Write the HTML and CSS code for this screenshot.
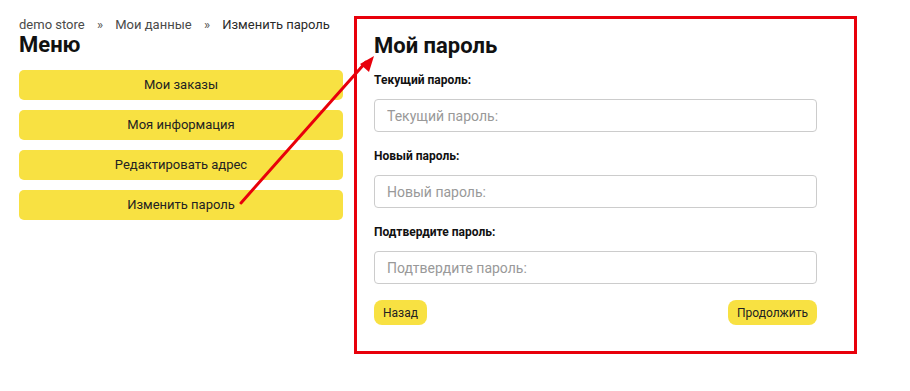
FILE: index.html
```html
<!DOCTYPE html>
<html lang="ru">
<head>
    <meta charset="UTF-8">
    <meta name="viewport" content="width=device-width, initial-scale=1.0">
    <title>Изменить пароль</title>
    <link rel="stylesheet" href="styles.css">
</head>
<body>
    <div class="page">
        <aside class="sidebar">
            <div class="breadcrumb">
                <a href="#">demo store</a>
                <span class="sep">»</span>
                <a href="#">Мои данные</a>
                <span class="sep">»</span>
                <span class="current">Изменить пароль</span>
            </div>
            <h2 class="title">Меню</h2>
            <nav class="menu">
                <a class="menu-item" href="#">Мои заказы</a>
                <a class="menu-item" href="#">Моя информация</a>
                <a class="menu-item" href="#">Редактировать адрес</a>
                <a class="menu-item" href="#">Изменить пароль</a>
            </nav>
        </aside>

        <section class="panel">
            <h1 class="title">Мой пароль</h1>
            <form class="form">
                <div class="form-group">
                    <label for="current">Текущий пароль:</label>
                    <input type="password" id="current" placeholder="Текущий пароль:">
                </div>
                <div class="form-group">
                    <label for="newpass">Новый пароль:</label>
                    <input type="password" id="newpass" placeholder="Новый пароль:">
                </div>
                <div class="form-group">
                    <label for="confirm">Подтвердите пароль:</label>
                    <input type="password" id="confirm" placeholder="Подтвердите пароль:">
                </div>
                <div class="actions">
                    <button type="button" class="btn">Назад</button>
                    <button type="submit" class="btn">Продолжить</button>
                </div>
            </form>
        </section>
    </div>

    <!-- annotation arrow -->
    <svg class="arrow" width="910" height="391" viewBox="0 0 910 391">
        <line x1="241" y1="203" x2="366" y2="62" stroke="#e8000b" stroke-width="3" stroke-linecap="round"/>
        <polygon points="374,56 360,64 369,72" fill="#e8000b"/>
    </svg>
</body>
</html>
```

FILE: styles.css
```css
body {
    margin: 0;
    padding: 0;
    background: #fff;
    font-family: Roboto, "Noto Sans", sans-serif;
    color: #222;
}

.page {
    display: flex;
    align-items: flex-start;
    gap: 11px;
    padding: 16px 0 0 19px;
}

.sidebar {
    width: 324px;
}

.breadcrumb {
    font-size: 13px;
    line-height: 14px;
    padding-top: 2px;
    white-space: nowrap;
}

.breadcrumb a {
    color: #4a4a4a;
    text-decoration: none;
}

.breadcrumb .sep {
    color: #555;
    margin: 0 9px;
}

.breadcrumb .current {
    color: #2a2a2a;
}

.title {
    margin: 0;
    font-size: 22px;
    line-height: 24px;
    font-weight: 700;
    color: #111;
}

.sidebar .title {
    line-height: 22px;
    margin-top: 2px;
}

.menu {
    display: flex;
    flex-direction: column;
    gap: 10px;
    margin-top: 14px;
}

.menu-item {
    display: block;
    height: 30px;
    line-height: 30px;
    text-align: center;
    background: #f8e142;
    border-radius: 5px;
    color: #222;
    font-size: 13px;
    text-decoration: none;
}

.panel {
    width: 443px;
    border: 3px solid #e8000b;
    padding: 13px 37px 26px 17px;
}

.panel .title {
    line-height: 28px;
    margin-bottom: 12px;
}

.form-group {
    margin-bottom: 16px;
}

.form-group label {
    display: block;
    font-size: 12px;
    line-height: 16px;
    font-weight: 700;
    color: #111;
    margin-bottom: 11px;
}

.form-group input {
    display: block;
    box-sizing: border-box;
    width: 100%;
    height: 33px;
    padding: 0 12px;
    border: 1px solid #ccc;
    border-radius: 4px;
    font-family: inherit;
    font-size: 14px;
    color: #333;
}

.form-group input::placeholder {
    color: #999;
}

.actions {
    display: flex;
    justify-content: space-between;
}

.btn {
    height: 25px;
    padding: 0 9px;
    border: none;
    border-radius: 8px;
    background: #f8e142;
    color: #222;
    font-family: inherit;
    font-size: 12px;
    cursor: pointer;
}

.arrow {
    position: absolute;
    top: 0;
    left: 0;
    pointer-events: none;
}
```
